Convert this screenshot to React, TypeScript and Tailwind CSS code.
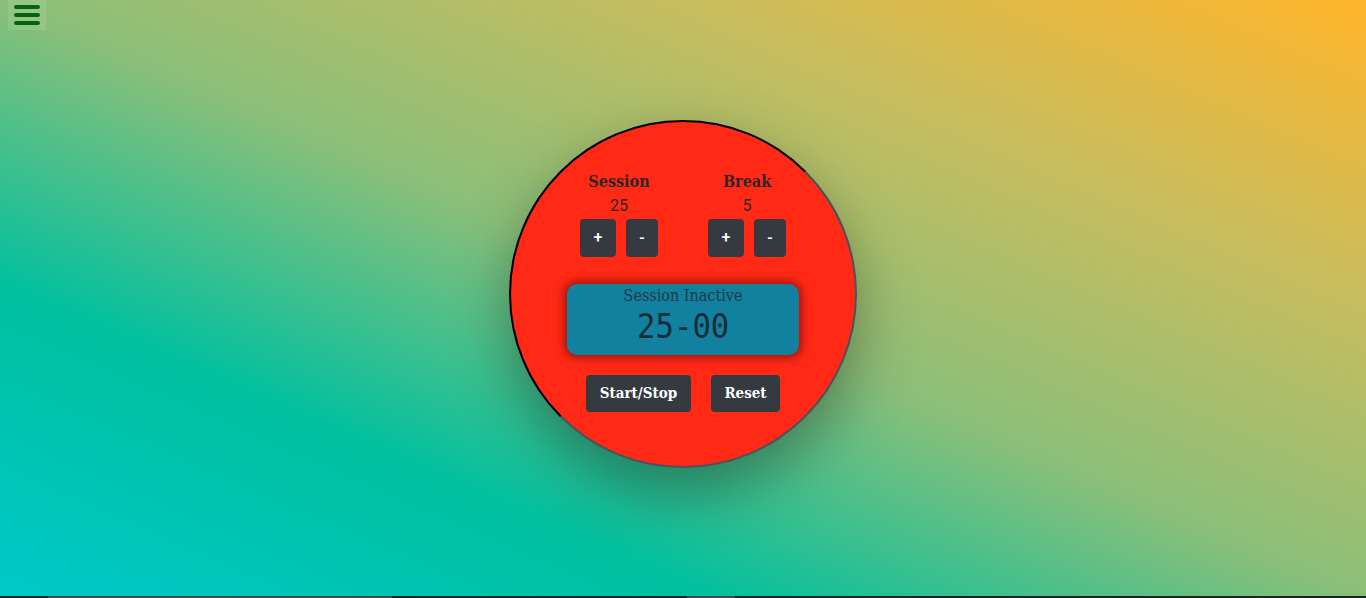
const slab = "font-['DejaVu_Serif_Condensed','Liberation_Serif',serif]";

function Stepper({ label, value }: { label: string; value: number }) {
  return (
    <div className="flex flex-col items-center w-[78px]">
      <span className={`${slab} text-[16px] leading-6 font-bold text-[#2f2626]`}>{label}</span>
      <span className="font-['Roboto',sans-serif] text-[16px] leading-6 text-[#2f2626]">{value}</span>
      <div className="flex gap-[10px] mt-px">
        <button className="w-9 h-[38px] rounded bg-[#343a40] text-white font-['Roboto',sans-serif] text-[16px] font-medium">
          +
        </button>
        <button className="w-8 h-[38px] rounded bg-[#343a40] text-white font-['Roboto',sans-serif] text-[16px] font-medium">
          -
        </button>
      </div>
    </div>
  );
}

export default function App() {
  return (
    <div className="relative w-full h-[598px] overflow-hidden bg-[linear-gradient(to_top_right,#00c9c9_0%,#00c09f_26%,#8bbf79_50%,#c8bd5e_75%,#ffb52a_100%)]">
      {/* Nav toggle */}
      <button className="absolute top-0 left-2 w-[38px] h-[30px] bg-white/10 flex flex-col items-center justify-center gap-1">
        <span className="block w-[26px] h-1 rounded-full bg-[#05650f]" />
        <span className="block w-[26px] h-1 rounded-full bg-[#05650f]" />
        <span className="block w-[26px] h-1 rounded-full bg-[#05650f]" />
      </button>

      <main className="h-[596px] flex items-center justify-center pb-2">
        <div className="w-[348px] h-[348px] rounded-full bg-[#ff2916] border-2 border-t-black border-l-black border-r-[#4b525a] border-b-[#4b525a] shadow-[0_24px_60px_rgba(0,0,0,0.35)] flex flex-col items-center pt-12">
          <div className="flex gap-[50px]">
            <Stepper label="Session" value={25} />
            <Stepper label="Break" value={5} />
          </div>

          {/* Timer display */}
          <div className="mt-[27px] w-[232px] h-[71px] rounded-[10px] bg-[#12819f] shadow-[0_0_8px_3px_rgba(90,0,0,0.55)] flex flex-col items-center pt-[2px]">
            <span className={`${slab} text-[16px] leading-5 text-[#213846]`}>Session Inactive</span>
            <span className="font-['DejaVu_Sans_Mono',monospace] text-[34px] leading-[40px] text-[#182c38] scale-x-90">
              25-00
            </span>
          </div>

          <div className="mt-5 flex gap-5">
            <button className={`${slab} w-[105px] h-[37px] rounded bg-[#343a40] text-white text-[15px] font-bold`}>
              Start/Stop
            </button>
            <button className={`${slab} w-[69px] h-[37px] rounded bg-[#343a40] text-white text-[15px] font-bold`}>
              Reset
            </button>
          </div>
        </div>
      </main>

      {/* bottom scrollbar strip */}
      <div className="flex h-[2px] bg-[#1f2323]">
        <div className="ml-12 w-[344px] bg-[#474747]" />
        <div className="ml-[295px] w-12 bg-[#474747]" />
      </div>
    </div>
  );
}
